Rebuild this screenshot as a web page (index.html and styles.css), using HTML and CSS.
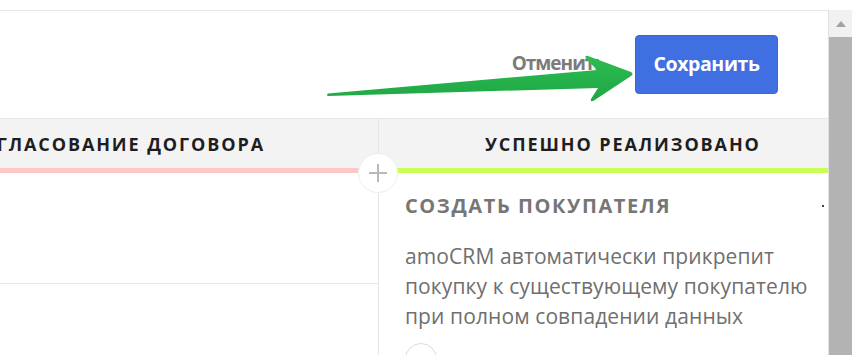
FILE: index.html
```html
<!DOCTYPE html>
<html lang="ru">
<head>
<meta charset="utf-8">
<title>Pipeline</title>
<link rel="stylesheet" href="styles.css">
</head>
<body>
<div class="page">
  <div class="topgap"></div>
  <div class="main">
    <div class="content">
      <div class="toolbar">
        <span class="cancel">Отменить</span>
        <button class="save">Сохранить</button>
      </div>
      <div class="board">
        <div class="col col-left">
          <div class="col-head"><span class="head-text">СОГЛАСОВАНИЕ ДОГОВОРА</span></div>
          <div class="col-bar bar-pink"></div>
          <div class="left-body"></div>
          <div class="left-body2"></div>
        </div>
        <div class="col col-right">
          <div class="col-head head-right"><span class="head-text">УСПЕШНО РЕАЛИЗОВАНО</span></div>
          <div class="col-bar bar-green"></div>
          <div class="right-body">
            <div class="card-title">СОЗДАТЬ ПОКУПАТЕЛЯ</div>
            <p class="card-text">amoCRM автоматически прикрепит покупку к существующему покупателю при полном совпадении данных</p>
            <div class="toggle"></div>
          </div>
          <span class="dot"></span>
        </div>
        <div class="plus">
          <svg width="20" height="20" viewBox="0 0 20 20"><path d="M10 1v18M1 10h18" stroke="#b9b9b9" stroke-width="2" fill="none"/></svg>
        </div>
      </div>
    </div>
    <div class="scrollbar">
      <div class="sb-btn"><svg width="12" height="8" viewBox="0 0 12 8"><path d="M1 7L6 1l5 6z" fill="#a3a3a3"/></svg></div>
      <div class="sb-thumb"></div>
    </div>
  </div>
  <svg class="arrow" width="852" height="355" viewBox="0 0 852 355">
    <defs>
      <linearGradient id="ag" x1="0" y1="0" x2="0" y2="1">
        <stop offset="0" stop-color="#2cbd52"/>
        <stop offset="1" stop-color="#1fa644"/>
      </linearGradient>
    </defs>
    <path d="M328 93.5 L597 70 L586 58.5 Q584 55 588 56 L631 72 Q634 74 631 76 L594 100.5 Q590 102.5 591 99 L598 88 L328 96 Q326 95 328 93.5 Z" fill="url(#ag)"/>
  </svg>
</div>
</body>
</html>
```
FILE: styles.css
```css
* { box-sizing: border-box; }
html, body { margin: 0; padding: 0; }
body {
  width: 852px;
  height: 355px;
  overflow: hidden;
  background: #fff;
  font-family: "Open Sans", "Noto Sans", sans-serif;
}
.page { position: relative; width: 852px; height: 355px; display: flex; flex-direction: column; }
.topgap { height: 10px; flex: none; }
.main { flex: 1; display: flex; min-height: 0; }
.content { flex: 1; border-top: 1px solid #e6e6e6; display: flex; flex-direction: column; min-width: 0; }
.toolbar {
  height: 108px;
  flex: none;
  border-bottom: 1px solid #e8e8e8;
  display: flex;
  justify-content: flex-end;
  align-items: flex-start;
  padding: 24px 50px 0 0;
}
.cancel {
  margin-top: 15px;
  margin-right: 30px;
  font-size: 19px;
  font-weight: 700;
  color: #7b7b7b;
  letter-spacing: -1px;
}
.save {
  width: 143px;
  height: 59px;
  border: 1px solid #3a66d6;
  border-radius: 4px;
  background: #3f6fe0;
  color: #fff;
  font-family: "Open Sans", sans-serif;
  font-size: 19.5px;
  font-weight: 700;
  letter-spacing: -0.4px;
  padding: 0 0 3px;
}
.board { flex: 1; display: flex; position: relative; min-height: 0; overflow: hidden; }
.col { display: flex; flex-direction: column; }
.col-left { width: 379px; flex: none; border-right: 1px solid #e5e5e5; }
.col-right { flex: 1; position: relative; }
.col-head {
  flex: none;
  height: 49px;
  background: #f3f3f3;
  display: flex;
  align-items: center;
  justify-content: flex-end;
  padding-right: 113px;
  overflow: hidden;
  white-space: nowrap;
}
.head-right { justify-content: flex-start; padding: 0 0 0 106px; margin-right: 2px; }
.head-text {
  font-size: 18px;
  font-weight: 700;
  letter-spacing: 1.9px;
  color: #1e1e1e;
  flex: none;
}
.col-bar { height: 5px; flex: none; }
.bar-pink { background: #ffc6c8; }
.bar-green { background: #c8ff55; margin-right: 2px; }
.left-body { flex: none; height: 111px; border-bottom: 1px solid #e8e8e8; }
.right-body { flex: none; padding: 21px 0 0 26px; }
.card-title {
  font-size: 20px;
  font-weight: 700;
  letter-spacing: 1.6px;
  color: #767676;
  line-height: 24px;
}
.card-text {
  margin: 23px 0 0;
  font-size: 21px;
  line-height: 30px;
  color: #6f6f6f;
  width: 425px;
  letter-spacing: 0.1px;
}
.toggle {
  margin-top: 12px;
  width: 32px;
  height: 32px;
  border: 1px solid #dcdcdc;
  border-radius: 50%;
}
.dot {
  position: absolute;
  left: 443px;
  top: 86px;
  width: 2px;
  height: 2px;
  background: #444;
}
.plus {
  position: absolute;
  left: 358px;
  top: 34px;
  width: 40px;
  height: 40px;
  border-radius: 50%;
  background: #fff;
  border: 1px solid #eeeeee;
  display: flex;
  align-items: center;
  justify-content: center;
}
.scrollbar { width: 24px; flex: none; display: flex; flex-direction: column; border-left: 1px solid #e0e0e0; }
.sb-btn { height: 27px; background: #f1f1f1; display: flex; align-items: center; justify-content: center; flex: none; }
.sb-thumb { flex: 1; background: #b3b3b3; }
.arrow { position: absolute; left: 0; top: 0; pointer-events: none; }
```
